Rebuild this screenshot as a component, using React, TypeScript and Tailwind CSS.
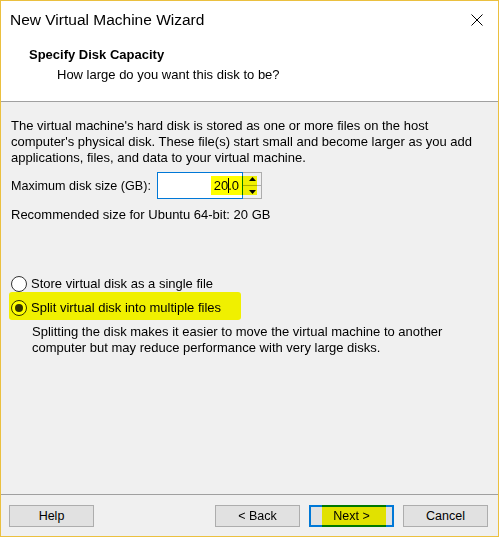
import React from "react";

const font = { fontFamily: '"Liberation Sans", Arial, sans-serif' };

function Btn({ children, def, hl }: { children: React.ReactNode; def?: boolean; hl?: boolean }) {
  return (
    <div
      className={
        "relative w-[85px] h-[22px] flex items-center justify-center text-[12.5px] text-black bg-[#e1e1e1] " +
        (def ? "border-2 border-[#0078d7]" : "border border-[#adadad]")
      }
    >
      <span className="pt-[1px]">{children}</span>
      {hl && (
        <div className="absolute top-[-2px] bottom-[-2px] left-[11px] w-[64px] bg-[#ffff00] mix-blend-multiply pointer-events-none" />
      )}
    </div>
  );
}

function Radio({ checked }: { checked?: boolean }) {
  return (
    <div className="w-[16px] h-[16px] rounded-full border border-[#333] bg-white flex items-center justify-center shrink-0">
      {checked && <div className="w-[8px] h-[8px] rounded-full bg-[#333]" />}
    </div>
  );
}

export default function App() {
  return (
    <div
      className="w-[499px] h-[537px] border border-[#ebc03f] bg-[#f0f0f0] flex flex-col text-black overflow-hidden"
      style={font}
    >
      {/* Header */}
      <div className="h-[101px] bg-white border-b border-[#a0a0a0] shrink-0 flex flex-col">
        <div className="flex items-center justify-between h-[36px] pl-[9px] pr-[15px]">
          <div className="text-[15.5px] leading-[20px] pt-[1px]">New Virtual Machine Wizard</div>
          <svg width="12" height="12" viewBox="0 0 12 12" className="mt-[1px]">
            <path d="M0.5 0.5 L11.5 11.5 M11.5 0.5 L0.5 11.5" stroke="#000" strokeWidth="1" fill="none" />
          </svg>
        </div>
        <div className="pl-[28px] pt-[10px] text-[13px] leading-[16px] font-bold">Specify Disk Capacity</div>
        <div className="pl-[56px] pt-[4px] text-[13px] leading-[16px]">How large do you want this disk to be?</div>
      </div>

      {/* Body */}
      <div className="flex-1 flex flex-col pl-[10px] pt-[16px] text-[13px] leading-[16px]">
        <div className="whitespace-nowrap">
          <div>The virtual machine's hard disk is stored as one or more files on the host</div>
          <div>computer's physical disk. These file(s) start small and become larger as you add</div>
          <div>applications, files, and data to your virtual machine.</div>
        </div>

        <div className="flex items-center mt-[6px] h-[27px]">
          <div className="w-[146px] whitespace-nowrap text-[12.6px]">Maximum disk size (GB):</div>
          <div className="relative flex h-[27px]">
            <div className="w-[86px] h-[27px] bg-white border border-[#0078d7] flex items-center justify-end pr-[3px]">
              <span>20</span>
              <span className="inline-block w-[1px] h-[15px] bg-black -mr-[1px]" />
              <span>.0</span>
            </div>
            <div className="w-[19px] h-[27px] border border-[#adadad] border-l-0 flex flex-col bg-[#f0f0f0]">
              <div className="flex-1 flex items-center justify-center border-b border-[#adadad]">
                <svg width="7" height="4" viewBox="0 0 7 4"><path d="M3.5 0 L7 4 L0 4 Z" fill="#000" /></svg>
              </div>
              <div className="flex-1 flex items-center justify-center">
                <svg width="7" height="4" viewBox="0 0 7 4"><path d="M0 0 L7 0 L3.5 4 Z" fill="#000" /></svg>
              </div>
            </div>
            <div className="absolute left-[54px] top-[4px] w-[46px] h-[19px] bg-[#ffff00] mix-blend-multiply pointer-events-none" />
          </div>
        </div>

        <div className="mt-[8px]">Recommended size for Ubuntu 64-bit: 20 GB</div>

        <div className="mt-[53px] flex items-center h-[16px]">
          <Radio />
          <div className="ml-[4px]">Store virtual disk as a single file</div>
        </div>

        <div className="relative mt-[7px] flex items-center h-[18px]">
          <div className="absolute left-[-2px] top-[-7px] w-[232px] h-[28px] bg-[#ffff00] mix-blend-multiply rounded-[3px] pointer-events-none" />
          <Radio checked />
          <div className="ml-[4px]">Split virtual disk into multiple files</div>
        </div>

        <div className="pl-[21px] mt-[7px] whitespace-nowrap">
          <div>Splitting the disk makes it easier to move the virtual machine to another</div>
          <div>computer but may reduce performance with very large disks.</div>
        </div>
      </div>

      {/* Footer */}
      <div className="h-[42px] border-t border-[#a0a0a0] shrink-0 flex items-start pt-[10px] pl-[8px] pr-[10px]">
        <Btn>Help</Btn>
        <div className="flex-1" />
        <div className="flex gap-[9px]">
          <Btn>&lt; Back</Btn>
          <Btn def hl>Next &gt;</Btn>
          <Btn>Cancel</Btn>
        </div>
      </div>
    </div>
  );
}
